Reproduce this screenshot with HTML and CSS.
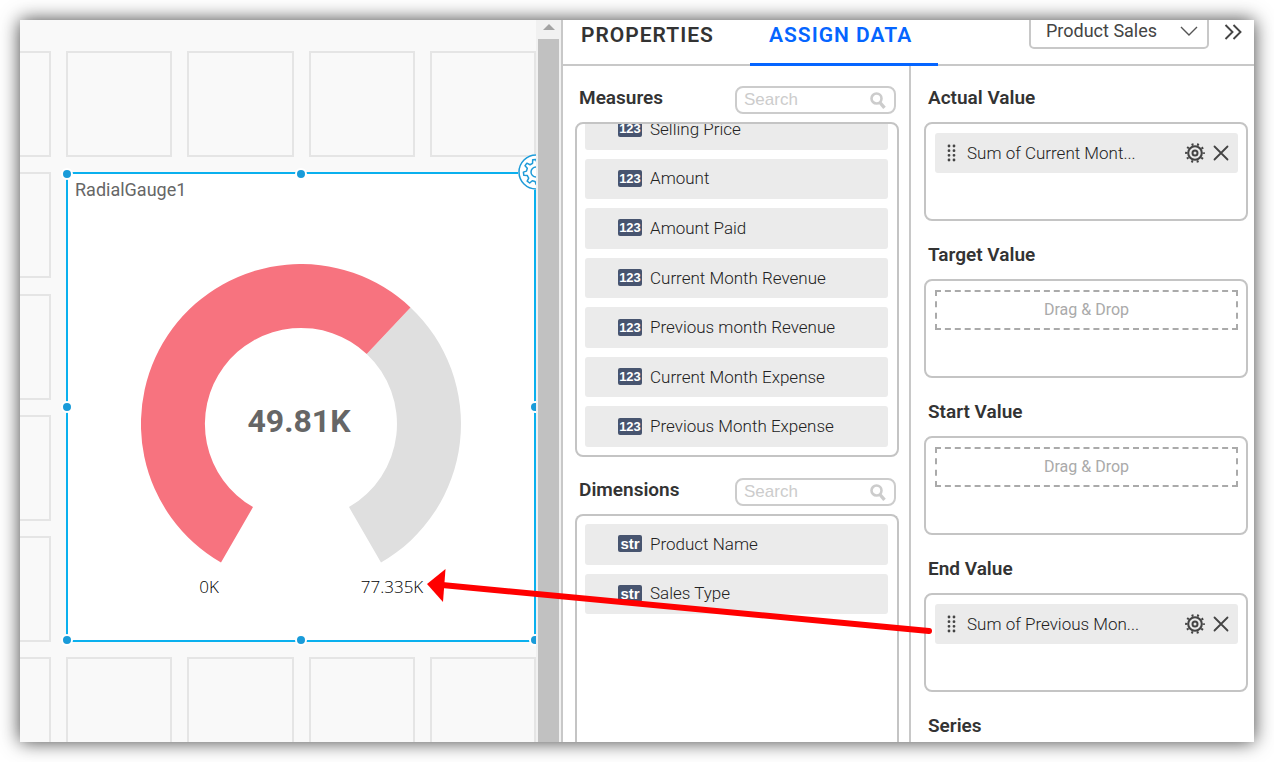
FILE: index.html
```html
<!DOCTYPE html>
<html lang="en">
<head>
<meta charset="utf-8">
<title>Dashboard Designer</title>
<link rel="stylesheet" href="styles.css">
</head>
<body>
<svg class="defs" aria-hidden="true">
  <symbol id="i-gear" viewBox="0 0 20 20">
    <g fill="none" stroke="currentColor">
      <circle cx="10" cy="10" r="6.8" stroke-width="2.1"/>
      <circle cx="10" cy="10" r="8.8" stroke-width="2.2" stroke-dasharray="2 3.529" stroke-dashoffset="1"/>
      <circle cx="10" cy="10" r="2.5" stroke-width="2"/>
    </g>
  </symbol>
  <symbol id="i-close" viewBox="0 0 16 16"><path d="M1.500 1.500l13 13M14.500 1.500l-13 13" fill="none" stroke="currentColor" stroke-width="1.8" stroke-linecap="round"/></symbol>
  <symbol id="i-grip" viewBox="0 0 10 18">
    <path d="M2 2h0M7 2h0M2 6.700h0M7 6.700h0M2 11.300h0M7 11.300h0M2 16h0M7 16h0" stroke="currentColor" stroke-width="2.8" stroke-linecap="round"/>
  </symbol>
  <symbol id="i-search" viewBox="0 0 16 18">
    <circle cx="6.500" cy="7.500" r="5" fill="none" stroke="currentColor" stroke-width="2.6"/>
    <path d="M9.500 11l5 5.800" stroke="currentColor" stroke-width="3.400"/>
  </symbol>
</svg>
<div class="frame">
  <main class="canvas">
    <div class="tiles">
      <i class="tile cut"></i><i class="tile"></i><i class="tile"></i><i class="tile"></i><i class="tile"></i>
      <i class="tile cut"></i><i class="tile cut"></i><i class="tile cut"></i><i class="tile cut"></i>
      <section class="widget">
        <h2 class="widget-title">RadialGauge1</h2>
        <svg class="gauge" viewBox="0 0 320 340" role="img" aria-label="Radial gauge">
          <path fill="#dfdfdf" d="M269.5 43.4A160 160 0 0 1 240 298.6L208 243.1A96 96 0 0 0 225.7 90Z"/>
          <path fill="#f7737f" d="M80 298.6A160 160 0 1 1 269.5 43.4L225.7 90A96 96 0 1 0 112 243.1Z"/>
          <text class="gauge-value" x="158" y="168">49.81K</text>
          <text class="gauge-label" x="68" y="329">0K</text>
          <text class="gauge-label" x="251" y="329">77.335K</text>
        </svg>
        <i class="handle tl"></i><i class="handle tc"></i>
        <i class="handle ml"></i><i class="handle mr"></i>
        <i class="handle bl"></i><i class="handle bc"></i><i class="handle br"></i>
        <button class="widget-settings" aria-label="Widget settings">
          <svg viewBox="0 0 36 36"><g fill="none" stroke="#1f9bd8" stroke-width="1.5" stroke-linejoin="round">
            <circle cx="18" cy="18" r="17"/><circle cx="18" cy="18" r="5"/>
            <path d="M16.4 5.5h3.2l.6 3.4 2.7 1.1 2.9-2 2.2 2.3-1.9 2.8 1.2 2.7 3.2.6v3.2l-3.3.6-1.1 2.8 1.9 2.8-2.2 2.2-2.9-1.9-2.7 1.1-.6 3.3h-3.2l-.6-3.3-2.7-1.1-2.9 1.9-2.2-2.2 1.900-2.800-1.100-2.800-3.300-.6v-3.200l3.200-.6 1.200-2.700-1.900-2.800 2.200-2.300 2.900 2 2.700-1.100z" transform="rotate(-8 18 18)"/>
          </g></svg>
        </button>
      </section>
      <i class="tile last cut"></i><i class="tile last"></i><i class="tile last"></i><i class="tile last"></i><i class="tile last"></i>
    </div>
  </main>
  <div class="scrollbar"><svg viewBox="0 0 12 6"><path d="M0 6L6 0l6 6z" fill="#a3a3a3"/></svg><div class="thumb"></div></div>
  <aside class="panel">
    <header class="panel-head">
      <button class="tab">PROPERTIES</button>
      <button class="tab active">ASSIGN DATA</button>
      <div class="source">
        <select aria-label="Data source"><option>Product Sales</option></select>
        <svg viewBox="0 0 18 10"><path d="M1 1l8 8 8-8" fill="none" stroke="#555" stroke-width="1.4"/></svg>
      </div>
      <button class="collapse" aria-label="Collapse panel"><svg viewBox="0 0 18 16"><path d="M1.500 1l7 7-7 7M9.500 1l7 7-7 7" fill="none" stroke="#444" stroke-width="1.9"/></svg></button>
    </header>
    <div class="panel-body">
      <div class="fields">
        <div class="fields-head">
          <h3>Measures</h3>
          <label class="search"><input type="text" placeholder="Search" aria-label="Search measures"><svg><use href="#i-search"/></svg></label>
        </div>
        <div class="box measures">
          <ul class="list">
            <li><span class="type">123</span>Selling Price</li>
            <li><span class="type">123</span>Amount</li>
            <li><span class="type">123</span>Amount Paid</li>
            <li><span class="type">123</span>Current Month Revenue</li>
            <li><span class="type">123</span>Previous month Revenue</li>
            <li><span class="type">123</span>Current Month Expense</li>
            <li><span class="type">123</span>Previous Month Expense</li>
          </ul>
        </div>
        <div class="fields-head">
          <h3>Dimensions</h3>
          <label class="search"><input type="text" placeholder="Search" aria-label="Search dimensions"><svg><use href="#i-search"/></svg></label>
        </div>
        <div class="box dimensions">
          <ul class="list">
            <li><span class="type str">str</span>Product Name</li>
            <li><span class="type str">str</span>Sales Type</li>
          </ul>
        </div>
      </div>
      <div class="slots">
        <section><h3>Actual Value</h3>
          <div class="box"><div class="chip"><svg class="grip"><use href="#i-grip"/></svg><span>Sum of Current Mont...</span>
            <button class="gear" aria-label="Settings"><svg><use href="#i-gear"/></svg></button>
            <button class="close" aria-label="Remove"><svg><use href="#i-close"/></svg></button></div></div>
        </section>
        <section><h3>Target Value</h3><div class="box"><div class="drop">Drag &amp; Drop</div></div></section>
        <section><h3>Start Value</h3><div class="box"><div class="drop">Drag &amp; Drop</div></div></section>
        <section><h3>End Value</h3>
          <div class="box"><div class="chip"><svg class="grip"><use href="#i-grip"/></svg><span>Sum of Previous Mon...</span>
            <button class="gear" aria-label="Settings"><svg><use href="#i-gear"/></svg></button>
            <button class="close" aria-label="Remove"><svg><use href="#i-close"/></svg></button></div></div>
        </section>
        <section><h3>Series</h3></section>
      </div>
    </div>
  </aside>
  <svg class="arrow" viewBox="0 0 512 70" aria-hidden="true">
    <path d="M18 18L505 64" stroke="#f00" stroke-width="6" stroke-linecap="round"/>
    <path d="M3 17L21.500 2 19 35z" fill="#f00"/>
  </svg>
</div>
</body>
</html>
```
FILE: styles.css
```css
* { box-sizing: border-box; }
body { margin: 0; background: #fff; color: #333; font-family: Roboto, "Liberation Sans", sans-serif; }
h2, h3, ul { margin: 0; padding: 0; }
ul { list-style: none; }
button { border: 0; padding: 0; background: none; font: inherit; color: inherit; }
svg { display: block; }
.defs { position: absolute; width: 0; height: 0; }

.frame {
  position: relative;
  display: grid;
  grid-template-columns: minmax(0, 516fr) 27px minmax(0, 691fr);
  height: calc(100vh - 40px);
  margin: 20px;
  background: #fff;
  box-shadow: 0 0 18px rgba(0, 0, 0, .75);
}

.canvas { background: #f9f9f9; overflow: hidden; padding-top: 31px; }
.tiles {
  display: grid;
  grid-template-columns: 31px repeat(4, minmax(0, 1fr));
  grid-template-rows: 106px 107px 106px 106px 106px 106px;
  gap: 15px;
}
.tile { border: 2px solid #e5e5e5; height: 106px; }
.tile.cut { grid-column: 1; border-left: 0; }
.widget {
  position: relative;
  grid-column: 2 / 6;
  grid-row: 2 / 6;
  border: 2px solid #0ab0ee;
  background: #fff;
}
.widget-title { padding: 4px 7px; font-size: 18px; line-height: 24px; font-weight: 400; color: #666; }
.gauge { width: 320px; height: 340px; margin: 58px auto 0; }
.gauge-value { font-size: 32px; font-weight: 700; fill: #666; text-anchor: middle; }
.gauge-label { font-family: "Open Sans", sans-serif; font-weight: 300; font-size: 17px; fill: #000; text-anchor: middle; }
.handle {
  position: absolute;
  width: 12px;
  height: 12px;
  margin: -6px;
  border: 2px solid #fff;
  border-radius: 50%;
  background: #199bd9;
}
.tl, .tc { top: 0; }
.ml, .mr { top: 50%; }
.bl, .bc, .br { top: 100%; }
.tl, .ml, .bl { left: -1px; }
.tc, .bc { left: 50%; }
.mr, .br { left: calc(100% + 1px); }
.widget-settings { position: absolute; top: -20px; right: -20px; width: 36px; height: 36px; border-radius: 50%; background: #fff; }

.scrollbar { background: #f1f1f1; border-right: 2px solid #c8c8c8; padding: 4px 2px 0; display: flex; flex-direction: column; align-items: center; gap: 9px; }
.scrollbar svg { width: 12px; height: 6px; }
.thumb { flex: 1; align-self: stretch; background: #c1c1c1; }

.panel { display: flex; flex-direction: column; min-width: 0; overflow: hidden; }
.panel-head { display: flex; height: 46px; border-bottom: 2px solid #c8c8c8; }
.tab { flex: 0 0 188px; height: 46px; padding: 0 0 12px 19px; border-bottom: 3px solid transparent; font-size: 21px; line-height: 27px; font-weight: 600; letter-spacing: 1px; text-align: left; }
.tab:first-child { flex-basis: 187px; padding-left: 18px; }
.tab.active { color: #0565ff; border-color: #0565ff; }
.source { display: grid; align-self: flex-end; width: 180px; margin: 0 0 15px auto; }
.source > * { grid-area: 1 / 1; }
.source select { height: 36px; padding: 0 15px 2px; appearance: none; border: 2px solid #c8c8c8; border-radius: 5px; background: #fff; font: 18px Roboto, sans-serif; color: #444; }
.source svg { width: 18px; height: 10px; align-self: center; justify-self: end; margin-right: 11px; pointer-events: none; }
.collapse { align-self: flex-start; margin: 4px 12px 0 15px; }
.collapse svg { width: 18px; height: 16px; }

.panel-body { flex: 1; min-height: 0; display: grid; grid-template-columns: minmax(0, 348fr) minmax(0, 343fr); }
.fields { display: flex; flex-direction: column; min-height: 0; padding: 20px 10px 0 12px; border-right: 2px solid #c8c8c8; }
h3 { font-size: 19px; line-height: 24px; font-weight: 600; padding-left: 4px; }
.box { border: 2px solid #c4c4c4; border-radius: 8px; }
.fields-head { display: flex; justify-content: space-between; height: 28px; margin-bottom: 8px; padding-right: 3px; }
.search { display: flex; align-items: center; width: 161px; height: 28px; border: 2px solid #ccc; border-radius: 8px; color: #ccc; padding: 0 8px 0 7px; }
.search input { flex: 1; min-width: 0; border: 0; padding: 0; background: none; outline: 0; font: 17px "Liberation Sans", sans-serif; }
.search input::placeholder { color: #ccc; opacity: 1; }
.search svg { width: 16px; height: 18px; }
.measures { height: 335px; flex: none; margin-bottom: 21px; padding: 0 9px 0 8px; overflow: hidden; }
.measures .list { height: 338px; margin-top: -15px; }
.dimensions { flex: 1; border-bottom: 0; border-radius: 8px 8px 0 0; padding: 8px 9px 0 8px; }
.dimensions .list { height: 90px; }
.list { display: flex; flex-direction: column; gap: 9px; }
.list li { flex: 1; display: flex; align-items: center; gap: 8px; padding: 0 0 1px 33px; border-radius: 3px; background: #ebebeb; font-size: 17px; font-weight: 300; color: #222; }
.type { width: 24px; height: 17px; border-radius: 2px; background: #47546f; color: #fff; font: bold 13px/18px "Liberation Sans", sans-serif; text-align: center; }
.type.str { font-size: 15px; }

.slots { display: flex; flex-direction: column; gap: 22px; min-height: 0; padding: 20px 6px 0 13px; }
.slots h3 { margin-bottom: 12px; }
.slots .box { height: 99px; padding: 9px 8px 0 9px; }
.chip { display: flex; align-items: center; height: 40px; padding: 0 9px 0 12px; border-radius: 3px; background: #ebebeb; color: #444; font-size: 17px; }
.chip span { flex: 1; margin-left: 10px; padding-bottom: 1px; font-weight: 300; color: #222; }
.grip { width: 10px; height: 18px; }
.gear svg { width: 20px; height: 20px; }
.close { margin-left: 8px; }
.close svg { width: 16px; height: 16px; }
.drop { height: 40px; border: 2px dashed #aaa; color: #aaa; font-size: 16px; line-height: 36px; text-align: center; }

.arrow { position: absolute; left: 404px; top: 547px; width: 512px; height: 70px; pointer-events: none; }
```
